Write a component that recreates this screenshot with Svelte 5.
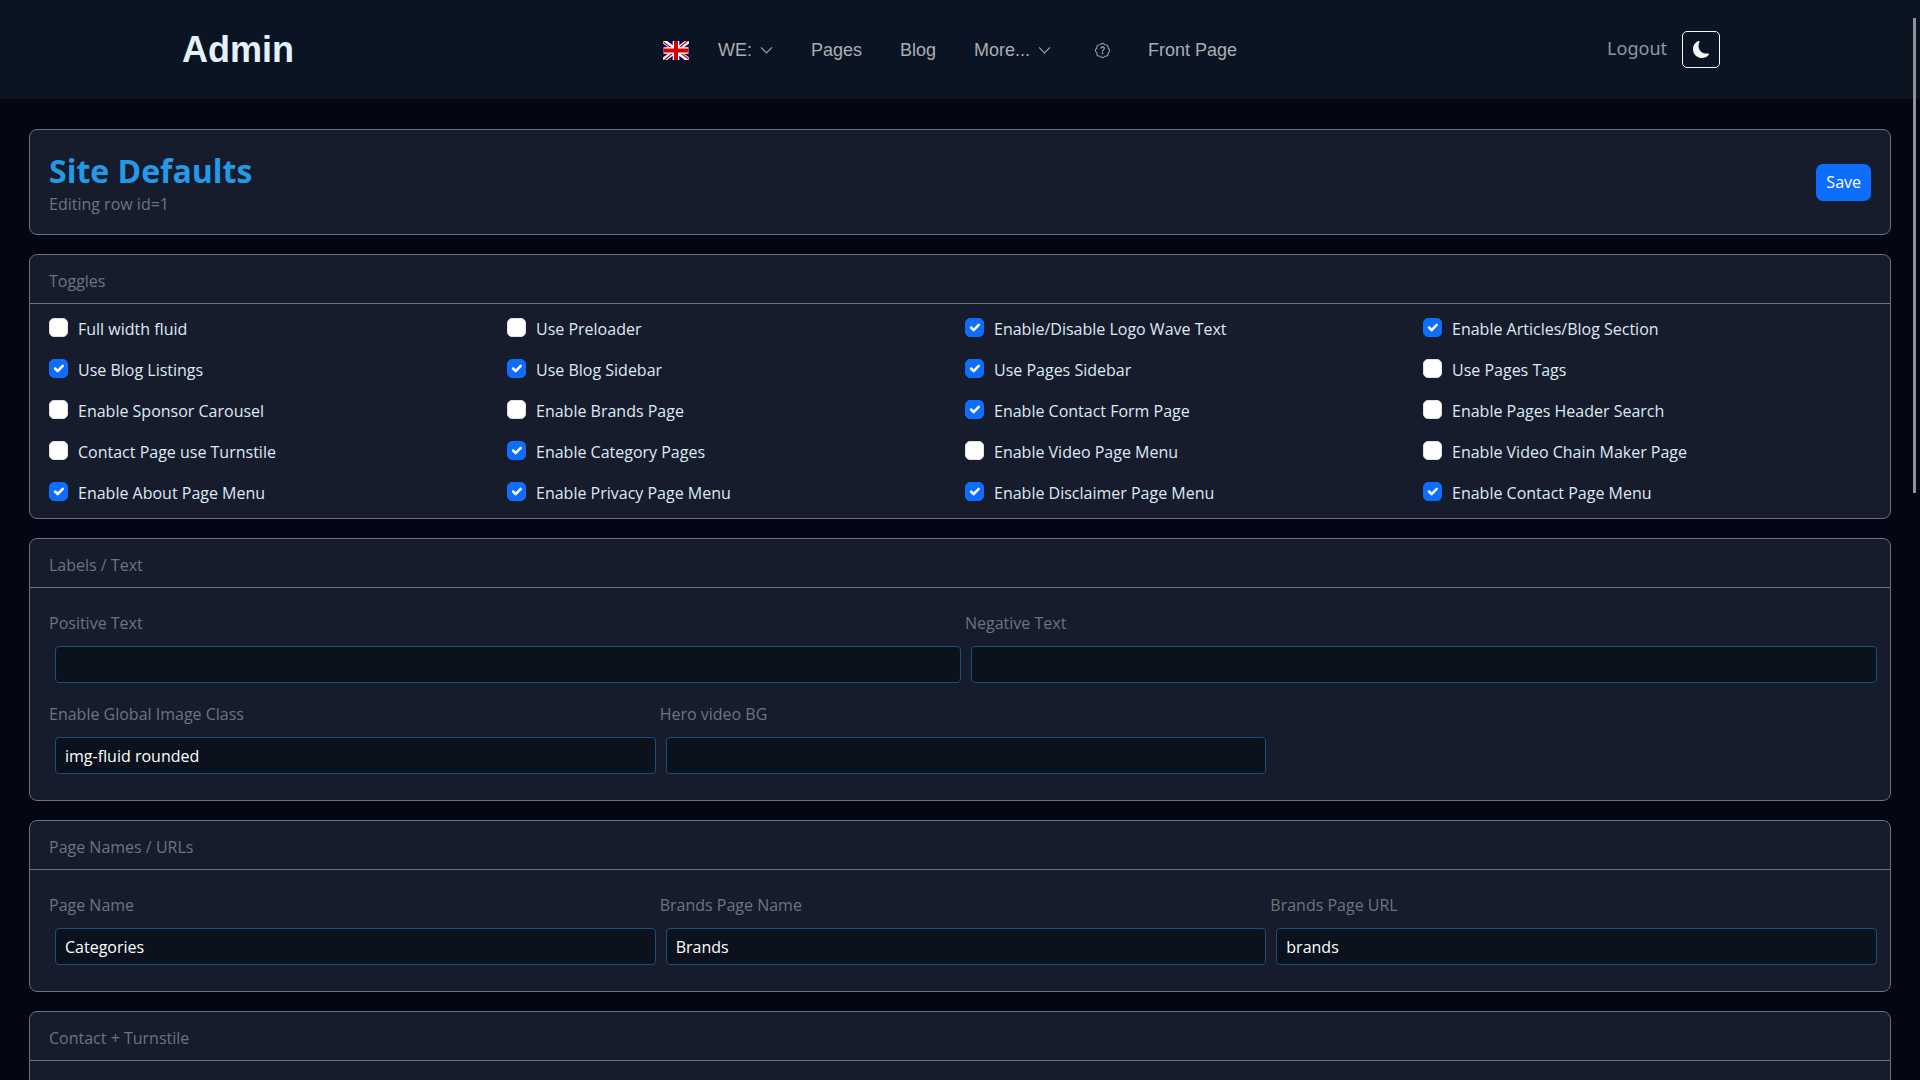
<script lang="ts">
    let toggles = $state([
        { name: 'full_width', label: 'Full width fluid', on: false },
        { name: 'preloader', label: 'Use Preloader', on: false },
        { name: 'logo_wave', label: 'Enable/Disable Logo Wave Text', on: true },
        { name: 'articles', label: 'Enable Articles/Blog Section', on: true },
        { name: 'blog_listings', label: 'Use Blog Listings', on: true },
        { name: 'blog_sidebar', label: 'Use Blog Sidebar', on: true },
        { name: 'pages_sidebar', label: 'Use Pages Sidebar', on: true },
        { name: 'pages_tags', label: 'Use Pages Tags', on: false },
        { name: 'sponsor_carousel', label: 'Enable Sponsor Carousel', on: false },
        { name: 'brands_page', label: 'Enable Brands Page', on: false },
        { name: 'contact_form', label: 'Enable Contact Form Page', on: true },
        { name: 'header_search', label: 'Enable Pages Header Search', on: false },
        { name: 'contact_turnstile', label: 'Contact Page use Turnstile', on: false },
        { name: 'category_pages', label: 'Enable Category Pages', on: true },
        { name: 'video_menu', label: 'Enable Video Page Menu', on: false },
        { name: 'video_chain', label: 'Enable Video Chain Maker Page', on: false },
        { name: 'about_menu', label: 'Enable About Page Menu', on: true },
        { name: 'privacy_menu', label: 'Enable Privacy Page Menu', on: true },
        { name: 'disclaimer_menu', label: 'Enable Disclaimer Page Menu', on: true },
        { name: 'contact_menu', label: 'Enable Contact Page Menu', on: true }
    ]);

    let textFields = $state([
        { name: 'positive_text', label: 'Positive Text', value: '', wide: true },
        { name: 'negative_text', label: 'Negative Text', value: '', wide: true },
        { name: 'image_class', label: 'Enable Global Image Class', value: 'img-fluid rounded', wide: false },
        { name: 'hero_video', label: 'Hero video BG', value: '', wide: false }
    ]);

    let pageFields = $state([
        { name: 'page_name', label: 'Page Name', value: 'Categories' },
        { name: 'brands_name', label: 'Brands Page Name', value: 'Brands' },
        { name: 'brands_url', label: 'Brands Page URL', value: 'brands' }
    ]);
</script>

{#snippet chevron()}
    <svg class="chevron" viewBox="0 0 16 16" aria-hidden="true">
        <path d="M1.6 4.6 8 11l6.400-6.400" fill="none" stroke="currentColor" stroke-width="1.300" stroke-linecap="round" stroke-linejoin="round" />
    </svg>
{/snippet}

<div class="page">
    <header class="topbar">
        <a class="brand" href="#admin">Admin</a>

        <nav class="nav">
            <a class="flag-link" href="#language" aria-label="English">
                <svg class="flag" viewBox="0 0 25 19" aria-hidden="true">
                    <rect width="25" height="19" fill="#00006b" />
                    <path d="M0 0 25 19M25 0 0 19" stroke="#fff" stroke-width="4.400" />
                    <path d="M0 .9 11 9.500M25 18.100 14 9.500M24 0 13 9M1 19 12 10" stroke="#d40000" stroke-width="1.300" />
                    <path d="M12.500 0v19M0 9.500h25" stroke="#fff" stroke-width="6.600" />
                    <path d="M12.500 0v19M0 9.500h25" stroke="#d40000" stroke-width="4" />
                </svg>
            </a>
            <a href="#we">WE: {@render chevron()}</a>
            <a href="#pages">Pages</a>
            <a href="#blog">Blog</a>
            <a href="#more">More... {@render chevron()}</a>
            <a class="help" href="#help" aria-label="Help">
                <svg viewBox="0 0 16 16" fill="currentColor" aria-hidden="true">
                    <path d="M8.050 9.600c.336 0 .504-.24.554-.627.04-.534.198-.815.847-1.260.673-.475 1.049-1.090 1.049-1.986 0-1.325-.92-2.227-2.262-2.227-1.020 0-1.792.492-2.100 1.290A1.710 1.710 0 0 0 6 5.480c0 .393.203.64.545.64.272 0 .455-.147.564-.51.158-.592.525-.915 1.074-.915.61 0 1.030.446 1.030 1.084 0 .563-.208.885-.822 1.325-.619.433-.926.914-.926 1.640v.111c0 .428.208.745.585.745z" />
                    <path d="m10.273 2.513-.921-.944.715-.698.622.637.89-.011a2.890 2.890 0 0 1 2.924 2.924l-.01.89.636.622a2.890 2.890 0 0 1 0 4.134l-.637.622.011.89a2.890 2.890 0 0 1-2.924 2.924l-.89-.01-.622.636a2.890 2.890 0 0 1-4.134 0l-.622-.637-.89.011a2.890 2.890 0 0 1-2.924-2.924l.01-.89-.636-.622a2.890 2.890 0 0 1 0-4.134l.637-.622-.011-.89a2.890 2.890 0 0 1 2.924-2.924l.89.01.622-.636a2.890 2.890 0 0 1 4.134 0l-.715.698a1.890 1.890 0 0 0-2.704 0l-.92.944-1.320-.016a1.890 1.890 0 0 0-1.911 1.912l.016 1.318-.944.921a1.890 1.890 0 0 0 0 2.704l.944.92-.016 1.320a1.890 1.890 0 0 0 1.912 1.911l1.318-.016.921.944a1.890 1.890 0 0 0 2.704 0l.92-.944 1.320.016a1.890 1.890 0 0 0 1.911-1.912l-.016-1.318.944-.921a1.890 1.890 0 0 0 0-2.704l-.944-.92.016-1.320a1.890 1.890 0 0 0-1.912-1.911z" />
                    <path d="M7.002 11a1 1 0 1 1 2 0 1 1 0 0 1-2 0" />
                </svg>
            </a>
            <a href="#front">Front Page</a>
        </nav>

        <div class="account">
            <a class="logout" href="#logout">Logout</a>
            <button class="theme-button" type="button" aria-label="Toggle dark mode">
                <svg viewBox="0 0 16 16" fill="currentColor" aria-hidden="true">
                    <path d="M6 .278a.77.77 0 0 1 .08.858 7.200 7.200 0 0 0-.878 3.460c0 4.021 3.278 7.277 7.318 7.277q.792-.001 1.533-.16a.79.79 0 0 1 .81.316.73.73 0 0 1-.031.893A8.350 8.350 0 0 1 8.344 16C3.734 16 0 12.286 0 7.710 0 4.266 2.114 1.312 5.124.06A.75.75 0 0 1 6 .278" />
                </svg>
            </button>
        </div>
    </header>

    <main class="content">
        <section class="card intro">
            <div>
                <h1>Site Defaults</h1>
                <p>Editing row id=1</p>
            </div>
            <button class="save-button" type="button">Save</button>
        </section>

        <section class="card">
            <h2>Toggles</h2>
            <div class="toggles">
                {#each toggles as toggle (toggle.name)}
                    <label class="toggle">
                        <input type="checkbox" name={toggle.name} bind:checked={toggle.on} />
                        <svg class="tick" viewBox="0 0 20 20" aria-hidden="true">
                            <path d="m6 10 3 3 6-6" fill="none" stroke="#fff" stroke-width="3" stroke-linecap="round" stroke-linejoin="round" />
                        </svg>
                        <span>{toggle.label}</span>
                    </label>
                {/each}
            </div>
        </section>

        <section class="card">
            <h2>Labels / Text</h2>
            <div class="fields">
                {#each textFields as field (field.name)}
                    <div class="field" class:wide={field.wide}>
                        <label for={field.name}>{field.label}</label>
                        <input id={field.name} type="text" bind:value={field.value} />
                    </div>
                {/each}
            </div>
        </section>

        <section class="card">
            <h2>Page Names / URLs</h2>
            <div class="fields">
                {#each pageFields as field (field.name)}
                    <div class="field">
                        <label for={field.name}>{field.label}</label>
                        <input id={field.name} type="text" bind:value={field.value} />
                    </div>
                {/each}
            </div>
        </section>

        <section class="card">
            <h2>Contact + Turnstile</h2>
            <div class="fields"></div>
        </section>
    </main>

    <div class="scroll-thumb"></div>
</div>

<style>
    :global(body) {
        background: #040713;
    }

    .page {
        box-sizing: border-box;
        height: 100vh;
        overflow: hidden;
        position: relative;
        color: #dee9f5;
        font-family: 'Segoe UI', 'Open Sans', 'Noto Sans', sans-serif;
        font-size: 16px;
        line-height: 25px;
    }

    .page * {
        box-sizing: border-box;
    }

    a {
        color: inherit;
        text-decoration: none;
    }

    .topbar {
        display: grid;
        grid-template-columns: 1fr auto 1fr;
        align-items: center;
        height: 99px;
        padding: 0 200px 0 182px;
        background: #0b1423;
    }

    .brand {
        color: #e3f1fb;
        font-family: 'Liberation Sans', Arial, sans-serif;
        font-size: 36px;
        font-weight: 700;
        line-height: 40px;
    }

    .nav {
        display: flex;
        align-items: center;
        gap: 38px;
        padding: 1px 2px 0 0;
        color: #aaadb1;
        font-family: 'Liberation Sans', Arial, sans-serif;
        font-size: 18px;
    }

    .nav a {
        display: flex;
        align-items: center;
        gap: 8px;
    }

    .nav .flag-link {
        margin-right: -9px;
    }

    .flag {
        display: block;
        width: 26px;
        height: 19px;
    }

    .chevron {
        width: 13px;
        height: 13px;
    }

    .help {
        padding-left: 6px;
    }

    .help svg {
        width: 15px;
        height: 15px;
    }

    .account {
        display: flex;
        align-items: center;
        justify-content: flex-end;
        gap: 15px;
    }

    .logout {
        padding-bottom: 3px;
        color: #91969d;
        font-family: 'Noto Sans', sans-serif;
        font-size: 18px;
    }

    .theme-button {
        display: flex;
        align-items: center;
        justify-content: center;
        width: 38px;
        height: 37px;
        padding: 0;
        border: 1px solid #f8f9fa;
        border-radius: 5px;
        background: transparent;
        color: #f8f9fa;
        cursor: pointer;
    }

    .theme-button svg {
        width: 17px;
        height: 17px;
    }

    .content {
        display: flex;
        flex-direction: column;
        gap: 19px;
        padding: 30px 29px;
    }

    .card {
        flex: none;
        border: 1px solid #6b717b;
        border-radius: 8px;
        background: #161c2b;
    }

    .intro {
        display: flex;
        align-items: center;
        justify-content: space-between;
        padding: 18px 19px;
    }

    h1 {
        margin: 0;
        color: #2499e6;
        font-size: 32px;
        font-weight: 700;
        line-height: 45px;
    }

    p {
        margin: 0;
        color: #6c757d;
        line-height: 23px;
    }

    .save-button {
        height: 37px;
        padding: 1px 10px 0;
        border: 0;
        border-radius: 7px;
        background: #0d6efd;
        color: #fff;
        font: inherit;
        cursor: pointer;
    }

    h2 {
        height: 49px;
        margin: 0;
        padding: 14px 19px 9px;
        border-bottom: 1px solid #6b717b;
        color: #6c757d;
        font-size: 16px;
        font-weight: 400;
    }

    .toggles {
        display: grid;
        grid-template-columns: repeat(4, 1fr);
        gap: 10px;
        padding: 10px 19px 9px;
    }

    .toggle {
        display: grid;
        grid-template-columns: 19px 1fr;
        column-gap: 10px;
        line-height: 31px;
    }

    .toggle input {
        grid-area: 1 / 1;
        appearance: none;
        width: 19px;
        height: 19px;
        margin: 4px 0 0;
        border: 1px solid #dee2e6;
        border-radius: 5px;
        background: #fff;
    }

    .toggle input:checked {
        border-color: #0d6efd;
        background: #0d6efd;
    }

    .tick {
        grid-area: 1 / 1;
        width: 17px;
        height: 17px;
        margin: 5px 1px 0;
        pointer-events: none;
        visibility: hidden;
    }

    .toggle input:checked + .tick {
        visibility: visible;
    }

    .fields {
        display: grid;
        grid-template-columns: repeat(6, 1fr);
        gap: 19px 10px;
        padding: 23px 19px 26px;
    }

    .field {
        display: flex;
        flex-direction: column;
        grid-column: span 2;
        gap: 10px;
    }

    .field.wide {
        grid-column: span 3;
    }

    .field label {
        color: #6c757d;
    }

    .field input {
        flex: none;
        width: 100%;
        height: 37px;
        margin-left: 6px;
        padding: 1px 9px 0;
        border: 1px solid #1b4f78;
        border-radius: 4px;
        outline: none;
        background: #0b111d;
        color: #fff;
        font: inherit;
    }

    .scroll-thumb {
        position: absolute;
        top: 18px;
        right: 4px;
        width: 3px;
        height: 44%;
        background: #929292;
    }
</style>
